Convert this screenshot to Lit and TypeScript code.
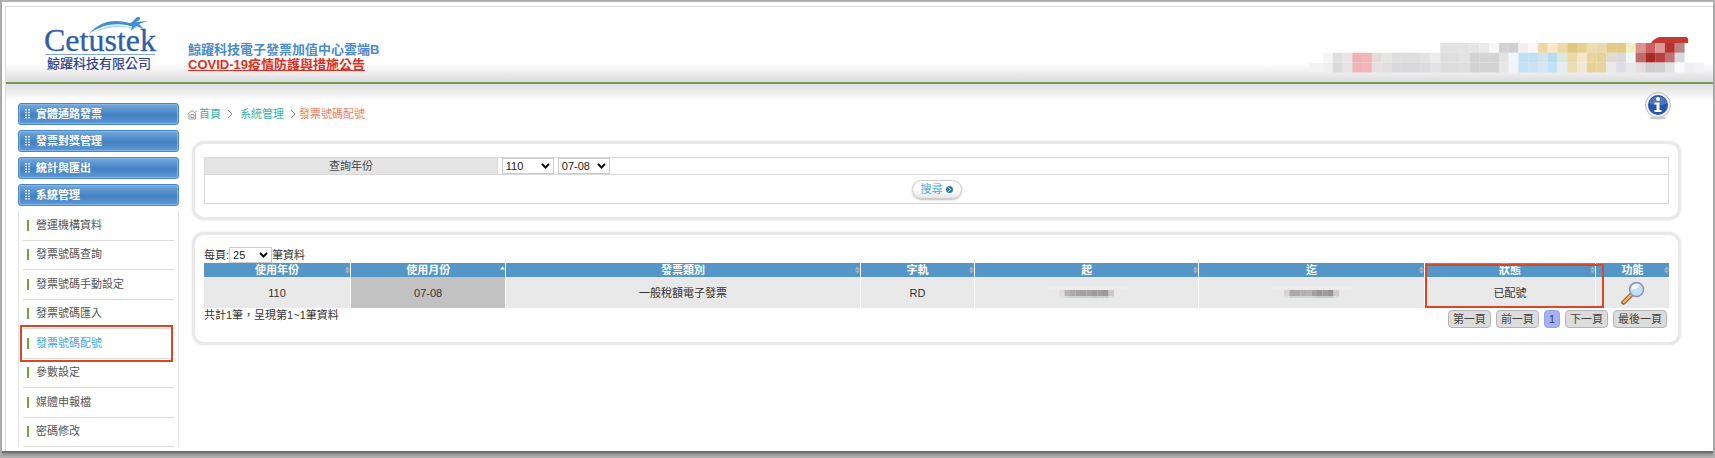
import { LitElement, html, css, svg } from "lit";
import { customElement, property, state } from "lit/decorators.js";
import { classMap } from "lit/directives/class-map.js";

const CELL = 9.77;

/* Colour cells of the obscured account strip; "" leaves a cell empty. */
const STRIP: string[][] = [
  ["", "", "", "", "", "", "", "", "", "", "", "", "#e2e2e2", "#e3e3e3", "#e3e3e3", "#e5e5e5", "#eaeaea", "#f8f8fa", "#d2d2d4", "#cfcfd2", "#f3eef0", "#fcf8f8", "#efd8a6", "#fae8c6", "#ecd9a6", "#e1c87f", "#e6d090", "#ecddb0", "#e8d8ac", "#e2ca86", "#e2ca86", "#f2efc2", "#dc9292", "#cd6060", "#dd9898", "#b93230", "#b88484"],
  ["#f5f5f5", "#dfdfdf", "#e8e5e5", "#f0b2b4", "#f2b4b6", "#e5dada", "#e4e4e2", "#dedede", "#dedede", "#dedede", "#e2e2e2", "#ececec", "#dedede", "#dedede", "#e3e3e3", "#d3d3d3", "#d4d4d4", "#d4d4d4", "#e4e4e4", "#f1f6fa", "#c0e0f8", "#bee0f8", "#d2e5ee", "#b6dbf3", "#dae7dd", "#ecd9a6", "#f4e7ce", "#e8d49c", "#e6d298", "#dfdbd2", "#d9d9dd", "#eff6f8", "#c06a6a", "#a82a24", "#b84242", "#c07272", "#dadade"],
  ["#efeff0", "#dadada", "#e6e3e3", "#f0b4b6", "#f2b6b8", "#e6dfe0", "#e0e0e0", "#d9d9dc", "#d9d9dc", "#d9d9dc", "#dcdcde", "#e4e2e6", "#dcdcdc", "#dcdcde", "#dedede", "#d2d2d2", "#d3d3d3", "#d3d3d3", "#e6e6e6", "#f2f4f8", "#c4e1f7", "#cbe3f4", "#d4e7f3", "#c2e0f8", "#e4edf0", "#ecdcb0", "#f2e8d8", "#e6d296", "#e5d49e", "#ece8ec", "#dcdce8", "#e8e8ea", "#e4dcde", "#d0ccd0", "#d2ced2", "#e2e2e4", "#fafafc", "#f0f0f4", "#f4f4f8"],
];

const MASK_START = ["#dedede", "#b4b4b4", "#a9a9a9", "#a2a2a2", "#a0a0a0", "#a2a2a2", "#9c9c9c", "#a0a0a0", "#9a9a9a", "#c8c8c8"];
const MASK_END = ["#d4d4d4", "#a8a8a8", "#acacac", "#b0b0b0", "#b4b4b4", "#a2a2a2", "#969696", "#9c9c9c", "#949494", "#cccccc"];

const sortIcon = (up = false) => html`<svg class="sort" viewBox="0 0 5 8" width="5" height="8" aria-hidden="true">
  <path d="M0 3.4 2.5 .6 5 3.4z" fill=${up ? "#fff" : "#a9b7c2"} />
  ${up ? "" : svg`<path d="M0 4.6 2.5 7.4 5 4.6z" fill="#a9b7c2" />`}
</svg>`;

const mask = (cells: string[]) => html`<svg class="mask" viewBox="0 0 80 12" width="80" height="12" aria-hidden="true">
  <path d="M0 0h80v2H0z" fill="#f1eaea" />
  ${cells.map((c, i) => svg`<rect x=${12 + i * 5.5} y="3" width="5.6" height="6" fill=${c} /><rect x=${12 + i * 5.5} y="9" width="5.6" height="2" fill=${c} opacity=".35" />`)}
</svg>`;

@customElement("brand-logo")
class BrandLogo extends LitElement {
  static styles = css`
    :host { display: block; }
    svg { display: block; }
    .word { font: 32px "Liberation Serif", serif; fill: #2f5fa8; stroke: #2f5fa8; stroke-width: 0.3; }
    .company { font: 13px "Noto Sans CJK TC", sans-serif; fill: #2b3a8c; stroke: #2b3a8c; stroke-width: 0.2; }
  `;
  render() {
    return html`<svg width="116" height="56" viewBox="0 0 116 56" role="img" aria-label="Cetustek 鯨躍科技有限公司">
      <text class="word" x="2" y="34">Cetustek</text>
      <path d="M47 17C56 5 72 1 87 6c3 1 6 3 8 5-16-6-33-5-48 6z" fill="#3f8fd6" />
      <path d="M53 15c12-8 27-8 41-3-14-3-28-3-41 3z" fill="#a9d2f3" />
      <path d="M83 5c4 2 7 1 9-2l2-2c2-2 5-1 4 1-1 2-3 2-4 3l12-1-9 3 5 5-8-3-5 5 1-5c-3 0-6-1-7-4z" fill="#3f8fd6" />
      <path d="M3 37.500h110" stroke="#7fa9d8" />
      <text class="company" x="5" y="51">鯨躍科技有限公司</text>
    </svg>`;
  }
}

@customElement("side-menu")
class SideMenu extends LitElement {
  @property({ type: Array }) groups: string[] = [];
  @property({ type: Array }) items: string[] = [];
  @property() current = "";

  static styles = css`
    :host { display: block; }
    .groups { display: grid; gap: 5px; margin-bottom: 5px; }
    .group {
      display: flex; align-items: center; gap: 6px; height: 22px; width: 100%;
      padding: 0 6px; border: 1px solid #4a86c6; border-radius: 3px;
      background: linear-gradient(#73aadd, #4480c2 55%, #5e9ad6);
      box-shadow: inset 0 0 0 1px #86b6e4;
      color: #fff; font: bold 11px/20px "Liberation Sans", "Noto Sans CJK TC", sans-serif; text-align: left;
    }
    .items {
      display: grid; grid-auto-rows: 1fr; min-height: 236px; box-sizing: border-box;
      margin: 0; padding: 0 4px; list-style: none;
      border: solid #e2e2e8; border-width: 0 1px;
    }
    .item { position: relative; display: flex; align-items: center; border-bottom: 1px solid #dcdcdc; }
    .link {
      margin-left: 4px; padding-left: 7px; border-left: 2px solid #6fa53c;
      color: #555; font-size: 11px; line-height: 11px; text-decoration: none;
    }
    .current .link { color: #3fa9e6; }
    .current::after { content: ""; position: absolute; inset: -4px 1px -4px -3px; border: 2px solid #dc4527; pointer-events: none; }
  `;
  render() {
    return html`<nav>
      <div class="groups">
        ${this.groups.map((g) => html`<button class="group" type="button">
          <svg width="5" height="10" viewBox="0 0 5 10" aria-hidden="true"><path d="M1 0v10M4 0v10" stroke="#fff" stroke-width="1.500" stroke-dasharray="1.500 1.200" /></svg>${g}
        </button>`)}
      </div>
      <ul class="items">
        ${this.items.map((i) => html`<li class=${classMap({ item: true, current: i === this.current })}><a class="link" href="#">${i}</a></li>`)}
      </ul>
    </nav>`;
  }
}

@customElement("app-root")
class AppRoot extends LitElement {
  @state() private columns = ["使用年份", "使用月份", "發票類別", "字軌", "起", "迄", "狀態", "功能"];

  static styles = css`
    :host {
      display: block; box-sizing: border-box; min-height: 100vh; padding: 2px 2px 6px;
      background: #b0b0b0; color: #333;
      font: 11px/16px "Liberation Sans", "Noto Sans CJK TC", sans-serif;
    }
    * { box-sizing: border-box; }
    .page { min-height: calc(100vh - 8px); padding: 4px 0 0 3px; background: #fff; border-bottom: 2px solid #6e6e6e; box-shadow: 0 2px 2px #8a8a8a; }
    .sheet { border: solid #d8d8d8; border-width: 1px 0 0 1px; }
    .top {
      display: flex; align-items: flex-end; gap: 30px; height: 77px; padding: 0 8px 9px 36px;
      background: linear-gradient(#fff 75%, #dcdcdc); border-bottom: 2px solid #769a56;
    }
    .titles { font-size: 13px; line-height: 15px; font-weight: bold; padding-bottom: 1px; }
    .site { margin: 0; font-size: 13px; line-height: 15px; color: #4a8ccb; }
    .notice { color: #dd3022; }
    .strip { margin-left: auto; display: block; }
    .body { display: grid; grid-template-columns: 161px minmax(0, 1fr); gap: 8px; padding: 19px 32px 4px 12px; background: linear-gradient(#dedede, #fff 17px); }
    .crumbs { display: flex; align-items: center; height: 22px; color: #35b5a8; }
    .crumbs a { color: inherit; text-decoration: none; }
    .chev { margin: 0 3px 0 6px; }
    .chev + a { margin-left: 4px; }
    .here { color: #ef7f5c; }
    .info { margin: -16px 9px 0 auto; padding: 0; border: 0; background: none; display: block; height: 28px; }
    .panel {
      margin: 0 0 12px 5px; padding: 13px 9px; border: 3px solid #e9e9e9; border-radius: 12px;
      background: #fff; box-shadow: 0 0 2px #e0e0e0;
    }
    .first { margin-top: 16px; }
    .query { width: 100%; border-collapse: collapse; }
    .query td, .query th { border: 1px solid #d8d8d8; padding: 0; height: 17px; font-weight: normal; line-height: 16px; }
    .query th { width: 20%; background: #e4e4e4; color: #444; }
    .query .fields { padding-left: 4px; }
    .query .action { height: 29px; text-align: center; }
    .pair { display: flex; gap: 4px; }
    .box { position: relative; display: inline-flex; align-items: center; }
    .box svg { position: absolute; right: 4px; pointer-events: none; }
    select {
      appearance: none; height: 16px; margin: 0; padding: 0 3px; border: 1px solid #ccc; border-radius: 0;
      background: #fff; color: #222; font: inherit; line-height: 14px;
    }
    .wide { width: 52px; }
    .slim { width: 43px; }
    .search {
      display: inline-flex; align-items: center; gap: 3px; height: 19px; padding: 0 8px; vertical-align: top;
      border: 1px solid #ccc; border-radius: 10px; background: linear-gradient(#fff 50%, #e6e6e6);
      box-shadow: 0 1px 2px #bbb; color: #45aee0; font: inherit; line-height: 16px;
    }
    .results { padding: 12px 9px 14px; }
    .length { display: flex; align-items: center; height: 16px; }
    .grid { width: 100%; border-collapse: collapse; table-layout: fixed; }
    .grid th { position: relative; height: 14px; padding: 0; background: #5596c8; color: #fff; line-height: 12px; }
    .grid td { position: relative; height: 31px; padding: 0; background: #e9e9e9; text-align: center; }
    .grid th + th, .grid td + td { border-left: 1px solid #fff; }
    .grid .sorted { background: #c2c2c2; }
    .sort { position: absolute; right: 0; top: 3px; }
    .mark { position: absolute; z-index: 1; left: 0; right: -9px; bottom: 0; height: 44px; border: 2px solid #dc4527; pointer-events: none; }
    .grid .marked { z-index: 1; }
    .mask, .view svg { display: block; margin: 0 auto; }
    .view { padding: 0; border: 0; background: none; display: block; margin: 0 auto; }
    .foot { display: flex; justify-content: space-between; align-items: flex-start; padding-right: 2px; line-height: 14px; }
    .pager { display: flex; gap: 5px; padding-top: 2px; }
    .pager button { height: 18px; padding: 0 4px; border: 1px solid #b4b4b4; border-radius: 4px; background: #dcdcdc; color: #444; font: inherit; line-height: 16px; }
    .pager .on { background: #a3b2f5; border-color: #94a4e6; }
    .c-year { width: 10%; } .c-month { width: 10.6%; } .c-type { width: 24.2%; } .c-track { width: 7.8%; }
    .c-from { width: 15.3%; } .c-to { width: 15.4%; } .c-state { width: 11.7%; } .c-act { width: 5%; }
  `;

  private arrow() {
    return html`<svg width="9" height="6" viewBox="0 0 9 6" aria-hidden="true"><path d="M1 1l3.500 3.500L8 1" fill="none" stroke="#111" stroke-width="2" /></svg>`;
  }

  private chevron() {
    return html`<svg class="chev" width="6" height="10" viewBox="0 0 6 10" aria-hidden="true"><path d="M1 1l4 4-4 4" fill="none" stroke="#888" /></svg>`;
  }

  render() {
    return html`<div class="page"><div class="sheet">
      <header class="top">
        <brand-logo></brand-logo>
        <div class="titles">
          <h1 class="site">鯨躍科技電子發票加值中心雲端B</h1>
          <a class="notice" href="#">COVID-19疫情防護與措施公告</a>
        </div>
        <svg class="strip" width="396" height="36" viewBox="0 0 396 36" aria-hidden="true">
          <path d="M0 26h14v9H0z" fill="#f4f2f5" />
          <path d="M342 6c4-6 10-7 18-7h14c4 0 6 2 5 7z" fill="#c23a34" />
          ${STRIP.map((row, y) => row.map((c, x) => (c ? svg`<rect x=${14 + x * CELL} y=${6 + y * CELL} width=${CELL + 0.1} height=${CELL + 0.1} fill=${c} />` : "")))}
        </svg>
      </header>
      <div class="body">
        <side-menu
          .groups=${["實體通路發票", "發票對獎管理", "統計與匯出", "系統管理"]}
          .items=${["營運機構資料", "發票號碼查詢", "發票號碼手動設定", "發票號碼匯入", "發票號碼配號", "參數設定", "媒體申報檔", "密碼修改"]}
          current="發票號碼配號"></side-menu>
        <main>
          <nav class="crumbs">
            <svg width="12" height="11" viewBox="0 0 12 11" aria-hidden="true"><path d="M.5 5.500 5 1.500l4 3M2 5v5h6.500V4.500M9 3V1.500M4 5.500h3v3H4z" fill="none" stroke="#999" /></svg>
            <a href="#">首頁</a>${this.chevron()}<a href="#">系統管理</a>${this.chevron()}<span class="here">發票號碼配號</span>
            <button class="info" type="button" aria-label="說明">
              <svg width="28" height="28" viewBox="0 0 28 28">
                <ellipse cx="14" cy="26" rx="9" ry="1.500" fill="#ccc" />
                <circle cx="14" cy="13" r="12.500" fill="#eef0f3" stroke="#b8bcc4" />
                <circle cx="14" cy="13" r="10" fill="#2855a8" />
                <path d="M5 11a9.500 9.500 0 0 1 18 0c-5 3-13 3-18 0z" fill="#6d93cf" opacity=".55" />
                <circle cx="14" cy="7" r="2" fill="#fff" />
                <path d="M10.500 10.500h5V18h2v2h-7v-2h2v-5.500h-2z" fill="#fff" />
              </svg>
            </button>
          </nav>
          <section class="panel first">
            <table class="query">
              <tr><th scope="row">查詢年份</th><td class="fields"><div class="pair">
                <span class="box"><select class="wide" aria-label="查詢年份"><option>110</option></select>${this.arrow()}</span>
                <span class="box"><select class="wide" aria-label="查詢月份"><option>07-08</option></select>${this.arrow()}</span>
              </div></td></tr>
              <tr><td class="action" colspan="2"><button class="search" type="button">搜尋
                <svg width="7" height="7" viewBox="0 0 7 7" aria-hidden="true"><circle cx="3.500" cy="3.500" r="3.500" fill="#337da5" /><path d="M2.500 1.500l2 2-2 2" fill="none" stroke="#fff" /></svg>
              </button></td></tr>
            </table>
          </section>
          <section class="panel results">
            <div class="length"><label for="len">每頁:</label><span class="box"><select id="len" class="slim"><option>25</option></select>${this.arrow()}</span>筆資料</div>
            <table class="grid">
              <colgroup><col class="c-year" /><col class="c-month" /><col class="c-type" /><col class="c-track" /><col class="c-from" /><col class="c-to" /><col class="c-state" /><col class="c-act" /></colgroup>
              <thead><tr>${this.columns.map((c, i) => html`<th scope="col">${c}${sortIcon(i === 1)}</th>`)}</tr></thead>
              <tbody><tr>
                <td>110</td><td class="sorted">07-08</td><td>一般稅額電子發票</td><td>RD</td>
                <td>${mask(MASK_START)}</td><td>${mask(MASK_END)}</td><td class="marked">已配號<span class="mark"></span></td>
                <td><button class="view" type="button" aria-label="檢視">
                  <svg width="24" height="24" viewBox="0 0 24 24">
                    <path d="M2.500 21.500l8-8" stroke="#8a5a2a" stroke-width="4.500" stroke-linecap="round" />
                    <path d="M2.800 21.200l7-7" stroke="#f4b25a" stroke-width="2.500" stroke-linecap="round" />
                    <circle cx="15.500" cy="8.500" r="7" fill="#bfe0f6" stroke="#8a96b8" stroke-width="1.500" />
                    <path d="M10.500 8a5 5 0 0 1 8-4c-1 3-4 5-8 4z" fill="#f2fafe" />
                  </svg></button></td>
              </tr></tbody>
            </table>
            <div class="foot"><span>共計1筆，呈現第1~1筆資料</span>
              <div class="pager"><button type="button">第一頁</button><button type="button">前一頁</button><button class="on" type="button">1</button><button type="button">下一頁</button><button type="button">最後一頁</button></div>
            </div>
          </section>
        </main>
      </div>
    </div></div>`;
  }
}
